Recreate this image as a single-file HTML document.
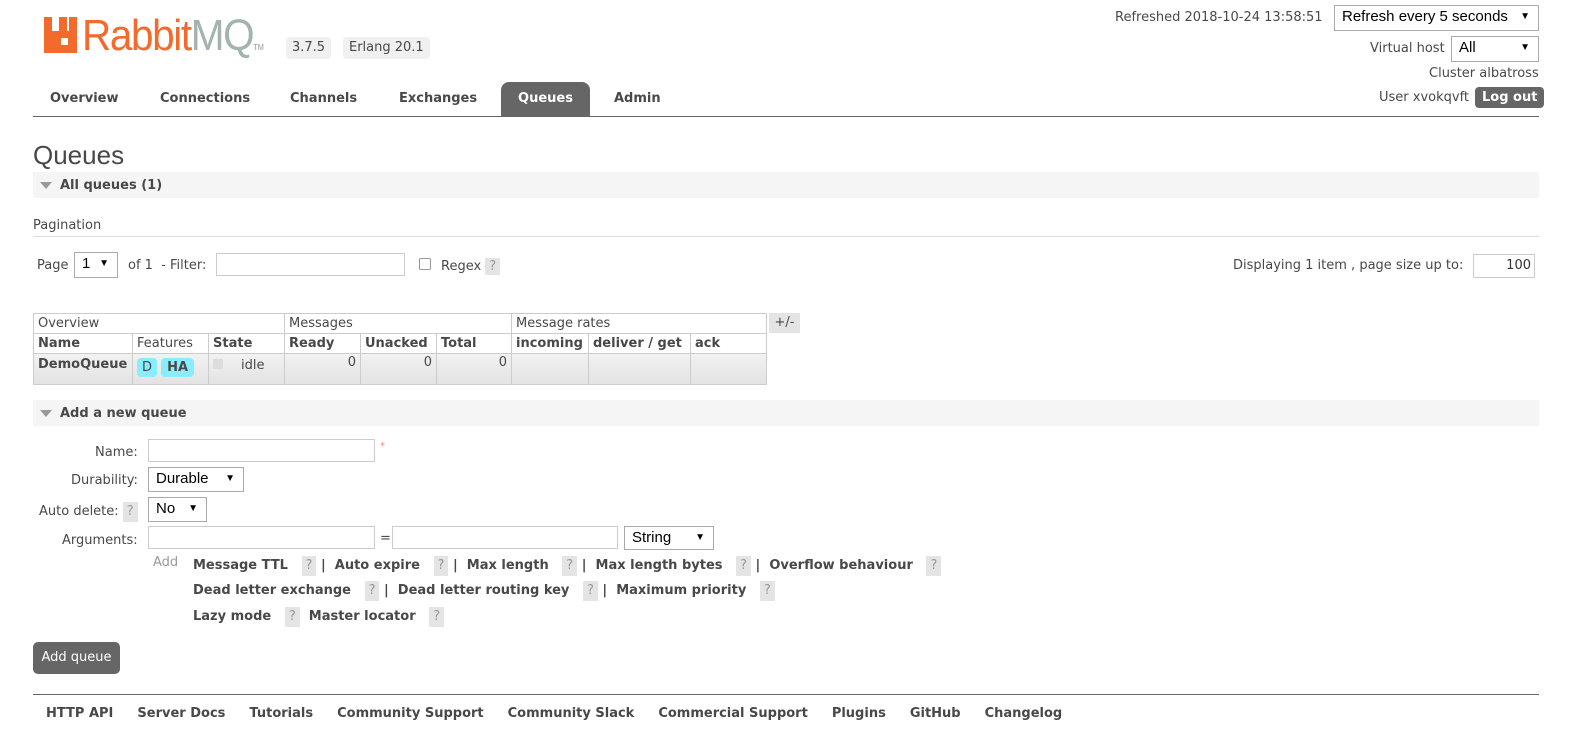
<!DOCTYPE html>
<html style="width:1581px;height:743px;overflow:hidden"><head><style>
*{margin:0;padding:0;box-sizing:border-box}
body{width:1581px;height:743px;background:#fff;font-family:"DejaVu Sans","Liberation Sans",sans-serif;font-size:13px;color:#484848;position:relative;overflow:hidden}
.a{position:absolute;white-space:nowrap}
.b{font-weight:bold}
.sel{position:absolute;border:1px solid #aaa;background:#fff;font-family:"Liberation Sans",sans-serif;font-size:15px;color:#000;padding-left:7px;line-height:22px}
.sel:after{content:"▼";position:absolute;right:8px;top:0;font-size:10px}
.inp{position:absolute;border:1px solid #ccc;background:#fff}
.q{display:inline-block;background:#e4e4e4;color:#999;padding:0 4px;font-weight:normal;line-height:20px}
.hdr{position:absolute;left:33px;width:1506px;height:26px;background:#f5f5f5}
.hdr span{position:absolute;left:27px;top:6px;font-weight:bold}
.hdr i{position:absolute;left:7px;top:10px;border:6px solid transparent;border-top:7px solid #999;border-bottom:0}
table{border-collapse:collapse;position:absolute;left:33px;top:313px}
td{border:1px solid #ccc;padding:1px 4px;height:20px;white-space:nowrap}
</style></head><body>
<svg class="a" style="left:44px;top:17px" width="36" height="36"><path d="M0 0h8v14h7V0h8v14h2V0h8v36H0z M17 21v7h7v-7z" fill="#f26b2c" fill-rule="evenodd"/></svg>
<div class="a" style="left:82px;top:12px;font-family:'Liberation Sans',sans-serif;font-size:44px;letter-spacing:-1.5px;color:#f26b2c;line-height:48px;transform:scaleX(0.92);transform-origin:left">Rabbit<span style="color:#a3b3ad">MQ</span><span style="font-size:8px;color:#999;letter-spacing:0">TM</span></div>
<div class="a" style="left:286px;top:37px;background:#f0f0f0;border-radius:4px;padding:2px 6px;line-height:18px">3.7.5</div>
<div class="a" style="left:343px;top:37px;background:#f0f0f0;border-radius:4px;padding:2px 6px;line-height:18px">Erlang 20.1</div>
<div class="a b" style="left:50px;top:91px">Overview</div>
<div class="a b" style="left:160px;top:91px">Connections</div>
<div class="a b" style="left:290px;top:91px">Channels</div>
<div class="a b" style="left:399px;top:91px">Exchanges</div>
<div class="a b" style="left:501px;top:82px;width:89px;height:34px;background:#666;color:#fff;border-radius:8px 8px 0 0;text-align:center;padding-top:9px">Queues</div>
<div class="a b" style="left:614px;top:91px">Admin</div>
<div class="a" style="left:33px;top:116px;width:1506px;height:1px;background:#666"></div>
<div class="a" style="left:1115px;top:10px">Refreshed 2018-10-24 13:58:51</div>
<div class="sel" style="left:1334px;top:5px;width:205px;height:26px">Refresh every 5 seconds</div>
<div class="a" style="left:1370px;top:41px">Virtual host</div>
<div class="sel" style="left:1451px;top:36px;width:88px;height:26px">All</div>
<div class="a" style="left:1429px;top:66px">Cluster albatross</div>
<div class="a" style="left:1379px;top:90px">User xvokqvft</div>
<div class="a b" style="left:1475px;top:87px;background:#666;color:#fff;border-radius:4px;padding:1px 7px;line-height:19px">Log out</div>
<div class="a" style="left:33px;top:140px;font-size:26px;color:#484848;font-family:'Liberation Sans',sans-serif">Queues</div>
<div class="hdr" style="top:172px"><i></i><span>All queues (1)</span></div>
<div class="a" style="left:33px;top:218px">Pagination</div>
<div class="a" style="left:33px;top:236px;width:1506px;height:1px;background:#ddd"></div>
<div class="a" style="left:37px;top:258px">Page</div>
<div class="sel" style="left:74px;top:252px;width:44px;height:26px">1</div>
<div class="a" style="left:128px;top:258px">of 1 &nbsp;- Filter:</div>
<div class="inp" style="left:216px;top:253px;width:189px;height:23px"></div>
<div class="a" style="left:419px;top:258px;width:12px;height:12px;border:1px solid #999;border-radius:2px"></div>
<div class="a" style="left:441px;top:258px">Regex <span class="q" style="line-height:17px">?</span></div>
<div class="a" style="left:1233px;top:258px">Displaying 1 item , page size up to:</div>
<div class="inp" style="left:1473px;top:254px;width:62px;height:24px;text-align:right;padding:3px 3px;color:#333">100</div>
<table>
<tr><td colspan="3" style="width:251px">Overview</td><td colspan="3">Messages</td><td colspan="3">Message rates</td></tr>
<tr class="b"><td style="width:99px">Name</td><td style="font-weight:normal;width:76px">Features</td><td style="width:76px">State</td><td style="width:76px">Ready</td><td style="width:76px">Unacked</td><td style="width:75px">Total</td><td style="width:77px">incoming</td><td style="width:102px">deliver / get</td><td style="width:76px">ack</td></tr>
<tr style="background:linear-gradient(#f2f2f2,#e2e2e2);height:31px;vertical-align:top"><td class="b" style="padding-top:3px">DemoQueue</td><td><span style="display:inline-block;background:#8ef;border-radius:4px;padding:2px 5px;margin-top:3px">D</span> <span class="b" style="display:inline-block;background:#8ef;border-radius:4px;padding:2px 6px">HA</span></td><td><span style="display:inline-block;width:10px;height:10px;background:#ddd;margin:4px 18px 0 0"></span>idle</td><td style="text-align:right">0</td><td style="text-align:right">0</td><td style="text-align:right">0</td><td></td><td></td><td></td></tr>
</table>
<div class="a" style="left:769px;top:313px;width:31px;height:20px;background:#e4e4e4;text-align:center;line-height:20px">+/-</div>
<div class="hdr" style="top:400px"><i></i><span>Add a new queue</span></div>
<div class="a" style="left:95px;top:445px">Name:</div>
<div class="inp" style="left:148px;top:439px;width:227px;height:23px"></div>
<div class="a" style="left:380px;top:441px;color:#f88;font-size:10px">*</div>
<div class="a" style="left:71px;top:473px">Durability:</div>
<div class="sel" style="left:148px;top:467px;width:96px;height:25px">Durable</div>
<div class="a" style="left:39px;top:502px">Auto delete: <span class="q">?</span></div>
<div class="sel" style="left:148px;top:497px;width:59px;height:25px">No</div>
<div class="a" style="left:62px;top:533px">Arguments:</div>
<div class="inp" style="left:148px;top:526px;width:227px;height:23px"></div>
<div class="a" style="left:380px;top:531px">=</div>
<div class="inp" style="left:392px;top:526px;width:226px;height:23px"></div>
<div class="sel" style="left:624px;top:526px;width:90px;height:24px">String</div>
<div class="a" style="left:153px;top:555px;color:#999">Add</div>
<div class="a b" style="left:193px;top:556px;line-height:20px">Message TTL &nbsp; <span class="q">?</span> | &nbsp;Auto expire &nbsp; <span class="q">?</span> | &nbsp;Max length &nbsp; <span class="q">?</span> | &nbsp;Max length bytes &nbsp; <span class="q">?</span> | &nbsp;Overflow behaviour &nbsp; <span class="q">?</span></div>
<div class="a b" style="left:193px;top:581px;line-height:20px">Dead letter exchange &nbsp; <span class="q">?</span> | &nbsp;Dead letter routing key &nbsp; <span class="q">?</span> | &nbsp;Maximum priority &nbsp; <span class="q">?</span></div>
<div class="a b" style="left:193px;top:607px;line-height:20px">Lazy mode &nbsp; <span class="q">?</span> &nbsp;Master locator &nbsp; <span class="q">?</span></div>
<div class="a" style="left:33px;top:642px;width:87px;height:32px;background:#666;color:#fff;border-radius:5px;text-align:center;line-height:32px">Add queue</div>
<div class="a" style="left:33px;top:694px;width:1506px;height:1px;background:#666"></div>
<div class="a b" style="left:46px;top:706px">HTTP API<span style="margin-left:24px">Server Docs</span><span style="margin-left:24px">Tutorials</span><span style="margin-left:24px">Community Support</span><span style="margin-left:24px">Community Slack</span><span style="margin-left:24px">Commercial Support</span><span style="margin-left:24px">Plugins</span><span style="margin-left:24px">GitHub</span><span style="margin-left:24px">Changelog</span></div>
</body></html>
